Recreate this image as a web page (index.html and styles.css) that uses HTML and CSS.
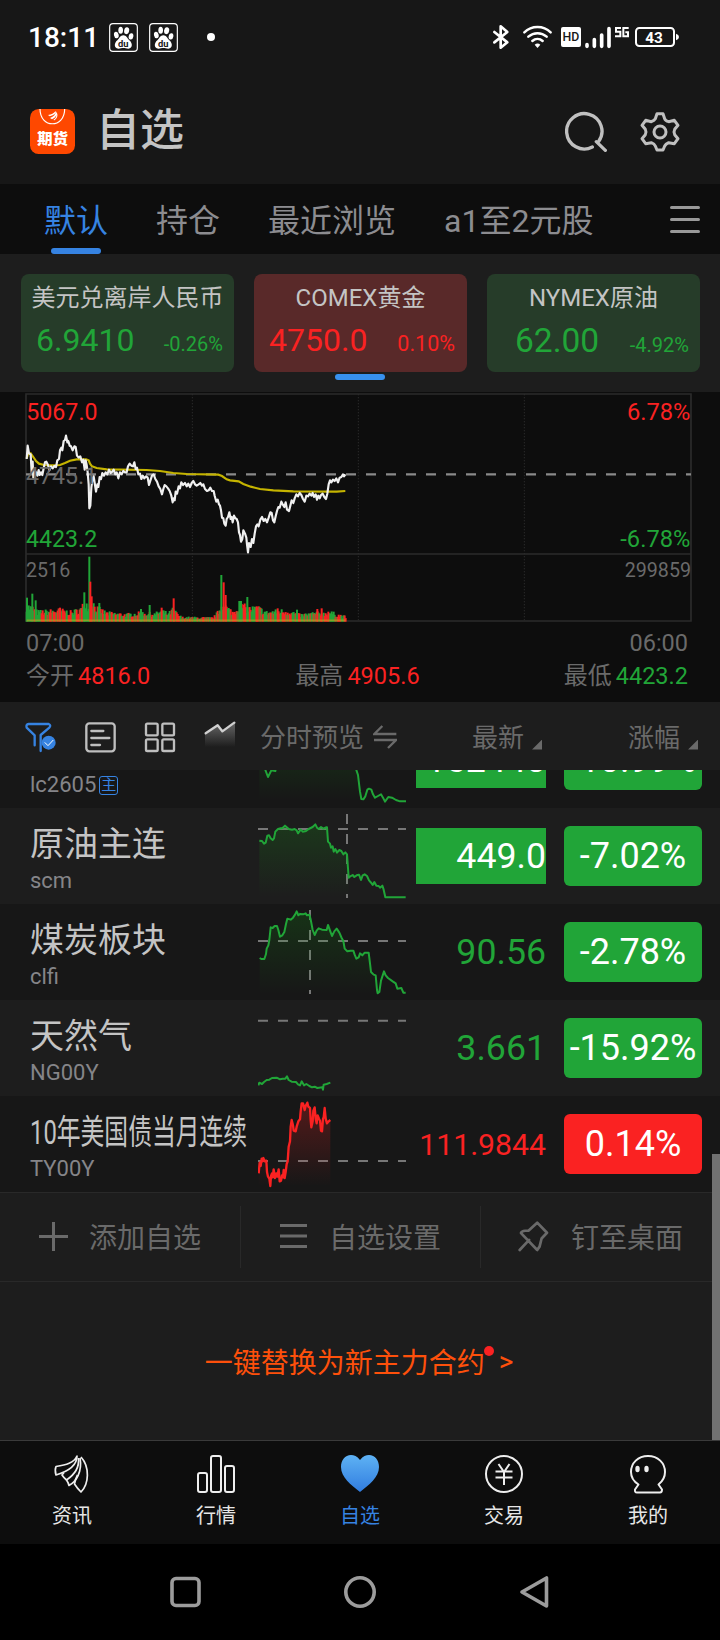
FILE: index.html
```
<!DOCTYPE html>
<html lang="zh-CN">
<head>
  <meta charset="UTF-8">
  <meta name="viewport" content="width=device-width, initial-scale=1.0">
  <title>自选</title>
  <link rel="stylesheet" href="styles.css">
</head>
<body>
  <svg class="defs" width="0" height="0">
    <defs>
      <linearGradient id="fillGreen" x1="0" y1="0" x2="0" y2="1">
        <stop offset="0" stop-color="#16a016" stop-opacity=".2"/>
        <stop offset="1" stop-color="#16a016" stop-opacity="0"/>
      </linearGradient>
      <linearGradient id="fillRed" x1="0" y1="0" x2="0" y2="1">
        <stop offset="0" stop-color="#fa2222" stop-opacity=".26"/>
        <stop offset="1" stop-color="#fa2222" stop-opacity="0"/>
      </linearGradient>
      <linearGradient id="fillGrey" x1="0" y1="0" x2="0" y2="1">
        <stop offset="0" stop-color="#999" stop-opacity=".6"/>
        <stop offset="1" stop-color="#999" stop-opacity="0"/>
      </linearGradient>
      <linearGradient id="fillHeart" x1="0" y1="0" x2="0" y2="1">
        <stop offset="0" stop-color="#5eb2f4"/>
        <stop offset="1" stop-color="#317de0"/>
      </linearGradient>
      <symbol id="paw" viewBox="0 0 87 87">
        <rect x="2" y="2" width="83" height="83" rx="10" fill="none" stroke="#fff" stroke-width="3.5"/>
        <g fill="#fff">
          <ellipse cx="22" cy="36" rx="7" ry="10" transform="rotate(-12 22 36)"/>
          <ellipse cx="35" cy="22" rx="7" ry="10.5"/>
          <ellipse cx="53" cy="23" rx="7.5" ry="10.5" transform="rotate(10 53 23)"/>
          <ellipse cx="66" cy="40" rx="7" ry="9.5" transform="rotate(10 66 40)"/>
          <path d="M43 37c9 0 12 9 18 15 10 8 11 24-3 25-6 0-10-2-15-2s-9 2-15 2c-14-1-13-17-3-25 6-6 9-15 18-15z"/>
        </g>
        <text x="43" y="71" class="paw-text">du</text>
      </symbol>
    </defs>
  </svg>

  <header class="status">
    <span class="clock">18:11</span>
    <svg width="29" height="29"><use href="#paw"/></svg>
    <svg width="29" height="29"><use href="#paw"/></svg>
    <span class="dot"></span>
    <svg class="signals" width="200" height="40" viewBox="390 51 600 120">
      <g fill="none" stroke="#fff" stroke-width="8" stroke-linejoin="round" stroke-linecap="round">
        <path d="M403 96l39 31-20 16V79l20 17-39 31"/>
        <path d="M493 97c22-21 57-21 79 0M505 110c16-14 39-14 55 0M517 123c9-8 22-8 31 0" stroke-width="7.500"/>
      </g>
      <path d="M524 134q9-7 17 0l-8.500 10z" fill="#fff"/>
      <rect x="603" y="81" width="60" height="60" rx="6" fill="#fff"/>
      <text x="633" y="124" class="hd">HD</text>
      <g stroke="#fff" stroke-width="11" stroke-linecap="round">
        <path d="M681 134v5M703 119v20M725 105v34M747 86v53"/>
      </g>
      <g fill="none" stroke="#fff" stroke-width="6">
        <path d="M783 84h-15v11h13v14h-16M806 84h-16v25h14V97h-8"/>
      </g>
      <rect x="828" y="84" width="114" height="54" rx="10" fill="none" stroke="#fff" stroke-width="6"/>
      <path d="M948 101q9 3 9 10t-9 10z" fill="#fff"/>
      <text x="882" y="129" class="battery">43</text>
    </svg>
  </header>

  <div class="title-bar">
    <svg width="45" height="45" viewBox="0 0 135 135">
      <rect width="135" height="135" rx="26" fill="#fe4800"/>
      <path d="M30 0c0 59 74 59 74 0" fill="none" stroke="#fff" stroke-width="3.500"/>
      <path d="M54 18q15-1 23-12 3 10-18 16zM60 27q17-6 18-20 6 15-12 24zM70 33q12-8 9-25 9 14-5 26z" fill="#fff"/>
      <text x="68" y="105" class="logo-text">期货</text>
    </svg>
    <h1>自选</h1>
    <svg class="search" width="42" height="42" viewBox="612 333 126 126">
      <path d="M694 441a53 53 0 1 1 18-15M706 425l27 26" fill="none" stroke="#c0c0c0" stroke-width="10" stroke-linecap="round"/>
    </svg>
    <svg width="42" height="42" viewBox="836 333 126 126">
      <path d="M890 341h18l5 15q2 6 12 9l17-4 11 15-10 12q-4 8 0 16l10 12-11 15-17-3q-9 4-12 10l-5 12h-18l-5-12q-3-7-12-10l-17 3-11-15 10-12q4-8 0-16l-10-12 11-15 17 4q9-4 12-9z" fill="none" stroke="#c0c0c0" stroke-width="9" stroke-linejoin="round"/>
      <circle cx="899" cy="396" r="18" fill="none" stroke="#c0c0c0" stroke-width="9"/>
    </svg>
  </div>

  <nav class="tabs">
    <span class="tab active">默认</span>
    <span class="tab">持仓</span>
    <span class="tab">最近浏览</span>
    <span class="tab">a1至2元股</span>
    <svg class="menu" width="30" height="28"><path d="M1.500 1.500h27M1.500 13.500h27M1.500 25.500h27" stroke="#999" stroke-width="3" stroke-linecap="round"/></svg>
  </nav>

  <section class="indices">
    <div class="index down">
      <div class="index-name">美元兑离岸人民币</div>
      <div class="index-nums"><span class="index-price">6.9410</span><span class="index-pct">-0.26%</span></div>
    </div>
    <div class="index up selected">
      <div class="index-name">COMEX黄金</div>
      <div class="index-nums"><span class="index-price">4750.0</span><span class="index-pct">0.10%</span></div>
    </div>
    <div class="index down oil">
      <div class="index-name">NYMEX原油</div>
      <div class="index-nums"><span class="index-price">62.00</span><span class="index-pct">-4.92%</span></div>
    </div>
  </section>

  <section class="chart">
    <svg width="720" height="235" viewBox="0 21 2160 705">
      <g fill="none" stroke="#2b2b2b" stroke-width="5">
        <path d="M78 27H2073V708H78zM78 507H2073"/>
        <path d="M577 27V708M1075 27V708M1573 27V708" stroke-width="3" stroke-dasharray="4 5"/>
      </g>
      <path d="M78 268H2073" stroke="#8a8a8a" stroke-width="7" stroke-dasharray="30 30"/>
      <path d="M80 220L84 208L92 205L100 216L108 228L117 236L132 240L160 241L180 240L195 234L210 227L230 223L258 223L266 226L270 236L276 244L290 249L320 253L440 255L480 258L520 264L560 267L655 269L666 273L680 283L690 286L716 289L730 297L752 305L780 312L820 316L880 319L1010 320L1036 318" fill="none" stroke="#c5b400" stroke-width="6.500"/>
      <path d="M80 222L83 182L87 205L92 208L95 262L98 230L100 278L104 256L108 262L112 272L116 255L119 270L123 262L127 270L131 250L135 232L139 230L144 240L148 256L153 244L158 250L163 243L168 246L172 226L177 222L180 196L184 188L187 196L191 168L195 165L198 152L202 172L205 168L209 182L213 184L218 196L223 184L227 186L231 212L236 218L241 214L246 232L250 224L254 254L257 226L260 240L263 262L266 298L268 370L271 362L274 308L277 284L281 274L285 300L288 320L292 298L295 306L299 276L303 282L307 264L312 272L317 262L322 268L327 254L332 264L337 260L341 254L346 268L350 262L355 280L360 262L365 268L370 258L375 262L380 262L384 244L389 236L394 242L399 244L403 232L407 252L411 248L415 268L420 266L424 282L428 272L433 280L438 274L443 278L447 300L452 284L456 272L461 268L466 282L471 290L476 304L481 312L486 328L490 312L494 300L499 304L504 310L509 318L514 332L518 352L521 340L524 346L527 320L531 326L536 304L540 310L544 292L549 300L555 294L560 304L565 296L570 306L575 294L580 288L585 298L590 302L596 298L601 294L606 302L610 298L615 312L621 318L626 316L631 308L636 318L641 318L644 332L649 350L653 344L657 358L660 362L663 376L666 398L670 400L673 416L677 422L680 402L684 396L688 382L692 402L695 396L698 412L702 392L706 400L710 402L714 412L717 442L720 450L723 470L727 462L730 436L735 446L739 458L741 478L744 502L747 474L752 486L756 462L760 474L764 446L768 424L772 418L776 424L781 404L786 396L791 408L796 402L801 412L806 398L811 382L815 384L819 406L823 412L827 394L831 378L835 366L839 368L844 350L848 358L853 366L857 352L861 374L867 378L871 362L875 346L880 354L884 340L889 328L894 334L899 324L904 330L909 342L914 350L919 332L924 334L929 326L934 332L938 324L942 336L947 328L951 344L955 332L959 340L963 330L968 326L973 336L978 342L982 326L986 298L990 286L994 292L999 284L1004 288L1009 280L1014 292L1019 278L1024 276L1029 268L1032 274L1036 268" fill="none" stroke="#f0f0f0" stroke-width="6.500" stroke-linejoin="round"/>
      <g id="volume"></g>
      <g class="chart-text">
        <text x="79" y="105" class="c-up">5067.0</text>
        <text x="78" y="297" class="c-ref">4745.1</text>
        <text x="78" y="487" class="c-down">4423.2</text>
        <text x="2071" y="105" class="c-up end pct-label">6.78%</text>
        <text x="2071" y="487" class="c-down end pct-label">-6.78%</text>
        <text x="78" y="576" class="c-vol">2516</text>
        <text x="2073" y="576" class="c-vol end">299859</text>
      </g>
    </svg>
    <div class="times"><span>07:00</span><span>06:00</span></div>
    <div class="stats">
      <span>今开<b class="c-up">4816.0</b></span>
      <span class="high">最高<b class="c-up">4905.6</b></span>
      <span>最低<b class="c-down">4423.2</b></span>
    </div>
  </section>

  <div class="list-head">
    <svg width="220" height="34" viewBox="69 75 660 102">
      <g fill="none" stroke-linejoin="round" stroke-linecap="round">
        <path d="M104 151v-30L80 98q-3-10 6-11h60q8 3 2 11l-26 22v48" stroke="#3683e2" stroke-width="7"/>
        <circle cx="146" cy="143" r="21" fill="#3683e2"/>
        <path d="M135 143l9 9 15-16" stroke="#fff" stroke-width="3"/>
        <rect x="259" y="85" width="85" height="84" rx="9" stroke="#bfbfbf" stroke-width="7"/>
        <path d="M274 108h36M274 129h54M274 150h26" stroke="#bfbfbf" stroke-width="7"/>
        <g stroke="#bfbfbf" stroke-width="7">
          <rect x="438" y="86" width="35" height="35" rx="4"/>
          <rect x="487" y="86" width="35" height="35" rx="4"/>
          <rect x="438" y="133" width="35" height="35" rx="4"/>
          <rect x="487" y="133" width="35" height="35" rx="4"/>
        </g>
        <path d="M615 116l38-25 14 18 38-27v74h-90z" fill="url(#fillGrey)"/>
        <path d="M617 115l36-24 14 18 36-26" stroke="#d0d0d0" stroke-width="7"/>
      </g>
    </svg>
    <span class="preview">分时预览</span>
    <svg class="swap" width="24" height="24" viewBox="1120 93 72 72"><path d="M1148 96l-24 24h66M1123 138h66l-24 24" fill="none" stroke="#6a6a6a" stroke-width="7"/></svg>
    <span class="col-price">最新<i class="sort"></i></span>
    <span class="col-pct">涨幅<i class="sort"></i></span>
  </div>

  <main class="list">
    <div class="row">
      <div class="name"><p>lc2605<em class="main-tag">主</em></p></div>
      <svg class="mini" viewBox="774 51 444 288">
        <path d="M778 120l17 104 10 22 10-20 10-4 20-60 60-30 120 10 44 78 8 20 6 60 4 14H778z" fill="url(#fillGreen)"/>
        <path d="M785 160L795 222L804 246L814 226L826 228L836 168L896 138L1016 148L1068 222L1074 240L1080 290L1084 312L1090 313L1096 304L1102 284L1107 281L1114 284L1119 298L1125 308L1134 303L1143 298L1149 308L1155 320L1165 306L1176 308L1188 315L1200 319H1218" class="line-down"/>
      </svg>
      <div class="price flash">152440</div>
      <div class="pct down">-10.99%</div>
    </div>
    <div class="row alt">
      <div class="name"><h2>原油主连</h2><p>scm</p></div>
      <svg class="mini" viewBox="774 339 444 288">
        <path d="M774 402H1218M1041 357V609" class="ref"/>
        <path d="M778 437L794 447L804 422L818 434L828 404L850 394L880 404L904 412L946 390L958 402L981 398L984 440L1002 470L1020 467L1041 476L1046 548V606H778z" fill="url(#fillGreen)"/>
        <path d="M778 437L786 438L792 446L797 443L802 422L807 421L812 430L818 435L822 430L826 410L834 402L842 400L848 399L855 392L862 398L866 402L876 404L884 402L890 406L894 415L902 404L908 410L918 408L926 402L938 396L946 388L951 398L956 402L963 396L970 401L978 397L981 397L984 440L990 446L993 458L998 454L1001 470L1006 462L1011 473L1018 465L1024 468L1030 478L1036 472L1041 478L1046 548L1051 544L1058 540L1063 546L1070 541L1077 539L1083 555L1088 541L1094 538L1101 543L1107 556L1114 564L1118 570L1123 561L1129 572L1136 573L1140 578L1147 572L1151 584L1156 607L1217 607" class="line-down"/>
      </svg>
      <div class="price flash">449.0</div>
      <div class="pct down">-7.02%</div>
    </div>
    <div class="row">
      <div class="name"><h2>煤炭板块</h2><p>clfi</p></div>
      <svg class="mini" viewBox="774 -108 444 288">
        <path d="M774 3H1218M930 -90V162" class="ref"/>
        <path d="M779 56L794 55L808 0L812 -38L830 -42L840 -10L852 -20L864 -64L880 -68L892 -84L930 -74L938 -30L944 -16L960 -35L980 -32L989 -46L999 -15L1015 -33L1030 0L1035 28L1060 30L1070 52L1085 40L1106 37L1113 98L1128 108V162H779z" fill="url(#fillGreen)"/>
        <path d="M779 54L784 57L793 57L798 42L800 26L805 16L808 0L812 -38L818 -36L824 -42L831 -42L835 -30L840 -10L847 -14L853 -24L858 -48L862 -64L872 -61L879 -67L885 -76L890 -86L895 -74L900 -78L909 -77L917 -80L921 -74L928 -76L932 -62L938 -30L944 -15L950 -28L956 -35L966 -31L980 -30L984 -45L990 -28L996 -12L1003 -26L1010 -34L1018 -22L1025 -6L1030 3L1034 26L1042 34L1052 32L1060 32L1064 44L1069 56L1076 52L1080 40L1087 46L1094 38L1106 38L1110 70L1113 96L1121 104L1127 106L1131 150L1133 160L1138 156L1143 122L1152 94L1157 106L1164 114L1178 124L1187 130L1192 146L1204 144L1210 158L1217 158" class="line-down"/>
      </svg>
      <div class="price c-down">90.56</div>
      <div class="pct down">-2.78%</div>
    </div>
    <div class="row alt">
      <div class="name"><h2>天然气</h2><p>NG00Y</p></div>
      <svg class="mini" viewBox="774 180 444 288">
        <path d="M774 242H1218" class="ref"/>
        <path d="M775 436L778 428L786 432L792 426L800 420L808 419L816 414L830 413L840 418L848 416L856 416L861 409L866 420L875 425L888 426L894 433L900 436L905 424L912 436L919 432L928 438L936 442L944 440L952 444L967 442L969 449L971 434L980 432L991 428" class="line-down"/>
      </svg>
      <div class="price c-down">3.661</div>
      <div class="pct down">-15.92%</div>
    </div>
    <div class="row">
      <div class="name"><h2 class="squeeze">10年美国债当月连续</h2><p>TY00Y</p></div>
      <svg class="mini" viewBox="774 468 444 288">
        <path d="M774 663H1218" class="ref"/>
        <path d="M776 700L788 655L800 665L806 710L860 690L866 620L872 570L876 540L886 570L894 550L904 495L924 492L934 555L944 505L956 545L966 570L974 505L982 545H991V738H776z" fill="url(#fillRed)"/>
        <path d="M776 700L779 668L782 678L785 656L787 664L790 654L794 664L799 662L801 696L804 710L808 716L811 738L813 708L816 700L818 712L821 688L825 714L829 700L832 710L836 688L839 724L843 722L846 706L849 712L851 690L854 714L857 696L860 672L863 664L866 620L870 604L872 560L875 540L879 556L881 572L887 574L890 560L895 544L900 538L902 514L905 490L909 490L912 502L914 510L917 498L922 488L925 500L930 504L932 540L934 562L938 544L940 512L944 502L947 536L950 550L953 526L957 536L960 542L963 572L966 574L969 536L971 532L974 504L977 536L981 550L986 544L991 540" class="line-up"/>
      </svg>
      <div class="price small c-up">111.9844</div>
      <div class="pct up">0.14%</div>
    </div>

    <div class="actions">
      <div class="action">
        <svg width="31" height="31"><path d="M15.500 1v29M1 15.500h29" stroke="#6a6a6a" stroke-width="3"/></svg>添加自选
      </div>
      <div class="action">
        <svg width="31" height="31"><path d="M2 4.500h27M2 15h27M2 25.500h27" stroke="#6a6a6a" stroke-width="3"/></svg>自选设置
      </div>
      <div class="action">
        <svg width="31" height="31" viewBox="356 845 92 92"><path d="M361 931l28-30M365 880q2-5 12-6h10l26-24 29 30-16 17-6 24-7 10-48-50z" fill="none" stroke="#6a6a6a" stroke-width="8" stroke-linejoin="round" stroke-linecap="round"/></svg>钉至桌面
      </div>
    </div>
    <div class="replace"><span class="replace-text">一键替换为新主力合约</span><span>&gt;</span></div>
    <div class="scrollbar"></div>
  </main>

  <footer class="tabbar">
    <div class="tab-item">
      <svg width="40" height="40" viewBox="0 0 40 40"><g fill="none" stroke="#eee" stroke-width="1.700" stroke-linejoin="round">
        <path d="M25 2C22 9 14 11 4 12.500q-1.500 3.500 0 8.500C14 18 25 13 25 2z"/>
        <path d="M12 18.500l-2 2.500q2 3 4.500 5C22 21 27.500 14 26.500 4"/>
        <path d="M14.500 26q2 3 2.500 5.500C24 28 30.500 18 28 4"/>
        <path d="M25.500 21q-2.500 5-3 9 2.500 4 6.500 8C37 30 38 13 29 3"/>
      </g></svg>
      <span>资讯</span>
    </div>
    <div class="tab-item">
      <svg width="40" height="40" viewBox="0 0 40 40"><g fill="none" stroke="#eee" stroke-width="2">
        <rect x="2" y="19" width="9" height="19" rx="2"/><rect x="15" y="2" width="10" height="36" rx="2"/><rect x="29" y="12" width="9" height="26" rx="2"/></g></svg>
      <span>行情</span>
    </div>
    <div class="tab-item active">
      <svg width="40" height="40" viewBox="0 0 40 40"><path d="M20 6C23 2 26 1 29 1c6 0 10 5 10 12 0 10-10 18-19 25C11 31 1 23 1 13 1 6 5 1 11 1c3 0 6 1 9 5z" fill="url(#fillHeart)"/></svg>
      <span>自选</span>
    </div>
    <div class="tab-item">
      <svg width="40" height="40" viewBox="0 0 40 40"><g fill="none" stroke="#eee" stroke-width="2">
        <circle cx="20" cy="20" r="18"/><path d="M14.500 10l5.500 8 5.500-8M11.500 17.500h17M11.500 23.500h17M20 18v13"/></g></svg>
      <span>交易</span>
    </div>
    <div class="tab-item">
      <svg width="40" height="40" viewBox="0 0 40 40"><path d="M10.500 30.500C5 27 3 23 3 18 3 9 10 2 20 2s17 7 17 16c0 5-2 9-6.500 12.500l3.500 5q0 3-2 3H9q-2.500 0-2-3z" fill="none" stroke="#eee" stroke-width="2" stroke-linejoin="round"/><ellipse cx="9.500" cy="15" rx="2.200" ry="3.300" fill="#eee"/><ellipse cx="18.500" cy="15" rx="2.200" ry="3.300" fill="#eee"/></svg>
      <span>我的</span>
    </div>
  </footer>

  <div class="sysnav">
    <svg width="34" height="34"><rect x="4" y="3.500" width="27" height="27" rx="4" fill="none" stroke="#9c9c9c" stroke-width="3.600"/></svg>
    <svg width="34" height="34"><circle cx="17" cy="17" r="14.200" fill="none" stroke="#9c9c9c" stroke-width="3.600"/></svg>
    <svg width="34" height="34"><path d="M28.500 3v28L4 17z" fill="none" stroke="#9c9c9c" stroke-width="3.600" stroke-linejoin="round"/></svg>
  </div>

  <script>
    // outline of the volume bars: [x, height]
    const shape = [[80, 60], [100, 48], [112, 36], [145, 38], [180, 42], [215, 34], [245, 48], [256, 80], [262, 60], [275, 75], [290, 50], [320, 32], [380, 26], [425, 32], [465, 28], [485, 40], [505, 28], [520, 46], [530, 30], [545, 16], [640, 14], [655, 36], [668, 68], [682, 50], [700, 34], [722, 62], [745, 48], [775, 50], [800, 34], [840, 40], [870, 38], [900, 24], [945, 32], [970, 30], [990, 34], [1037, 18]];
    // single peaks: [x, height, colour]
    const peaks = [[81, 72, "g"], [97, 84, "g"], [107, 64, "g"], [253, 88, "g"], [268, 195, "g"], [271, 120, "r"], [275, 76, "r"], [298, 56, "g"], [180, 42, "r"], [423, 38, "g"], [449, 50, "g"], [485, 42, "r"], [521, 70, "r"], [664, 140, "g"], [671, 118, "r"], [677, 80, "r"], [718, 62, "g"], [723, 62, "g"], [742, 74, "g"], [770, 46, "r"], [833, 40, "r"], [891, 36, "g"], [952, 38, "r"], [965, 40, "r"], [985, 30, "r"]];
    const volume = document.getElementById("volume");
    let seed = 7;
    function rand() {
      seed = (seed * 16807) % 2147483647;
      return seed / 2147483647;
    }
    function bar(x, h, colour) {
      const r = document.createElementNS("http://www.w3.org/2000/svg", "rect");
      r.setAttribute("x", x - 3);
      r.setAttribute("y", 710 - h);
      r.setAttribute("width", 6);
      r.setAttribute("height", h);
      r.setAttribute("fill", colour === "g" ? "#21a538" : "#fa2222");
      volume.appendChild(r);
    }
    for (let x = 80; x <= 1037; x += 3) {
      let i = 0;
      while (i < shape.length - 2 && shape[i + 1][0] < x) i++;
      const [x0, h0] = shape[i], [x1, h1] = shape[i + 1];
      const top = h0 + (h1 - h0) * (x - x0) / (x1 - x0);
      bar(x, Math.max(7, top * (0.5 + 0.5 * rand())), rand() > 0.48 ? "g" : "r");
    }
    peaks.forEach(p => bar(...p));
    volume.insertAdjacentHTML("beforeend", '<path d="M80 706H1037" stroke="#c5a020" stroke-width="5" stroke-opacity=".6"/>');
  </script>
</body>
</html>
```

FILE: styles.css
```
* { box-sizing: border-box; }
body { margin: 0; width: 720px; height: 1640px; display: flex; flex-direction: column; overflow: hidden; background: #171717; color: #c4c4c4; font-family: Roboto, "Noto Sans CJK SC", sans-serif; }
h1, h2, p { margin: 0; font-weight: 400; }
svg { flex: none; display: block; }
.defs { position: absolute; }
.c-up { color: #fa2222; fill: #fa2222; }
.c-down { color: #21a538; fill: #21a538; }

.status { height: 74px; flex: none; display: flex; align-items: center; padding-left: 28px; color: #fff; }
.clock { width: 81px; font-size: 28px; font-weight: 500; line-height: 30px; padding-top: 2px; }
.status svg { margin-right: 11px; }
.status .dot { width: 8px; height: 8px; border-radius: 50%; background: #fff; margin-left: 18px; }
.status .signals { margin: 0 30px 0 auto; }
.paw-text { font: 700 28px Roboto, sans-serif; text-anchor: middle; fill: #171717; }
.hd { font: 500 37px Roboto, sans-serif; text-anchor: middle; fill: #171717; }
.battery { font: 700 46px Roboto, sans-serif; text-anchor: middle; fill: #fff; }

.title-bar { height: 110px; flex: none; display: flex; align-items: center; padding: 5px 39px 0 30px; }
.logo-text { font: 900 46px "Noto Sans CJK SC", sans-serif; text-anchor: middle; fill: #fff; }
.title-bar h1 { font-size: 44px; font-weight: 500; line-height: 50px; margin: -2px 0 0 21px; }
.title-bar .search { margin: 0 32px 0 auto; }

.tabs { height: 70px; flex: none; display: flex; gap: 48px; padding: 0 20px 0 44px; background: #0d0d0d; font-size: 32px; line-height: 74px; color: #8c8c90; }
.tab { height: 70px; }
.tab.active { position: relative; color: #3683e2; }
.tab.active::after { content: ""; position: absolute; left: 7px; bottom: 0; width: 50px; height: 6px; border-radius: 3px; background: #3683e2; }
.tabs .menu { margin: 22px 0 0 auto; }

.indices { height: 138px; flex: none; display: grid; grid-template-columns: repeat(3, 213px); gap: 20px; padding: 20px 20px 20px 21px; background: #1d1d1d; }
.index { position: relative; height: 98px; border-radius: 8px; }
.index.down { background: #263c29; color: #21a538; }
.index.up { background: #592929; color: #fa2222; }
.index.selected::after { content: ""; position: absolute; left: 81px; bottom: -8px; width: 50px; height: 6px; border-radius: 3px; background: #3790ee; }
.index-name { font-size: 24px; line-height: 48px; text-align: center; color: #c4c4c4; white-space: nowrap; }
.index-nums { display: flex; justify-content: space-between; align-items: baseline; padding: 0 11px 0 15px; line-height: 36px; }
.index-price { font-size: 32px; }
.index-pct { font-size: 20px; }
.index.up .index-nums { padding-right: 12px; }
.index.up .index-pct { font-size: 21.5px; }
.index.oil .index-nums { padding-left: 28px; line-height: 37px; }
.index.oil .index-price { font-size: 33.5px; }

.chart { height: 310px; flex: none; background: #0d0d0d; color: #6a6a6a; }
.chart-text { font: 69.5px Roboto, sans-serif; }
.chart-text .end { text-anchor: end; }
.chart-text .pct-label { font-size: 71px; }
.chart-text .c-ref { fill: #6a6a6a; }
.chart-text .c-vol { fill: #6a6a6a; font-size: 59px; }
.times, .stats { display: flex; justify-content: space-between; padding: 0 32px 0 26px; font-size: 23.5px; line-height: 32px; }
.stats { font-size: 24px; line-height: 34px; }
.stats b { font-weight: 400; font-size: 23.5px; margin-left: 4px; }
.stats .high { padding-left: 1px; }

.list-head { height: 68px; flex: none; display: flex; align-items: center; padding: 1px 0 0 23px; background: #1d1d1d; font-size: 26px; line-height: 36px; color: #6a6a6a; }
.preview { margin: 2px 0 0 17px; }
.swap { margin-left: 9px; }
.col-price, .col-pct { display: flex; align-items: center; gap: 8px; margin-top: 2px; }
.col-price { margin-left: 75px; }
.col-pct { margin-left: 86px; }
.sort { width: 10px; height: 10px; margin-top: 14px; background: #6a6a6a; clip-path: polygon(100% 0, 100% 100%, 0 100%); }

/* scrolled down, the first row is cut off by the head */
.list { position: relative; height: 670px; flex: none; overflow: hidden; background: #1d1d1d; }
.row { height: 96px; display: flex; align-items: center; background: #171717; }
.row:first-child { margin-top: -58px; }
.row:first-child .name { padding-top: 50px; }
.row.alt { background: #1d1d1d; }
.name { width: 227px; margin-left: 30px; padding-top: 6px; }
.name h2 { font-size: 34px; line-height: 44px; white-space: nowrap; }
.name .squeeze { transform: scaleX(.7); transform-origin: left; }
.name p { display: flex; align-items: center; font-size: 22px; line-height: 30px; color: #858589; }
.main-tag { width: 19px; height: 19px; margin: 1px 0 0 3px; border: 1px solid #3683e2; border-radius: 3px; font-style: normal; font-size: 15px; line-height: 16px; text-align: center; color: #3683e2; }
.mini { width: 148px; height: 96px; margin-left: 1px; }
.ref { fill: none; stroke: #777; stroke-width: 6; stroke-dasharray: 30 30; }
.line-down, .line-up { fill: none; stroke: #21a538; stroke-width: 6; stroke-linejoin: round; }
.line-up { stroke: #fa2222; stroke-width: 7; }
.price { width: 130px; height: 56px; margin-left: 10px; font-size: 35.7px; line-height: 57px; text-align: right; }
.price.flash { background: #21a538; color: #fff; }
.price.small { font-size: 30.2px; }
.pct { width: 138px; height: 60px; margin-left: 18px; border-radius: 6px; font-size: 36px; line-height: 60px; text-align: center; color: #fff; }
.pct.down { background: #21a538; }
.pct.up { background: #fa2222; }

.actions { height: 90px; display: flex; align-items: center; border-top: 1px solid #292929; border-bottom: 1px solid #292929; }
.action { width: 241px; height: 62px; display: flex; align-items: center; gap: 20px; padding: 0 0 2px 38px; border-right: 1px solid #292929; font-size: 28px; color: #6a6a6a; white-space: nowrap; }
.action:nth-child(2) { width: 240px; padding-left: 37px; }
.action:last-child { border: 0; padding-left: 37px; gap: 22px; width: 239px; }
.replace { height: 158px; display: flex; align-items: center; justify-content: center; gap: 14px; padding-right: 2px; font-size: 28px; color: #fe500b; }
.replace-text { position: relative; }
.replace-text::after { content: ""; position: absolute; right: -9px; top: 5px; width: 10px; height: 10px; border-radius: 50%; background: #fa2222; }
.scrollbar { position: absolute; right: 0; top: 384px; width: 8px; height: 286px; background: #717171; }

.tabbar { height: 104px; flex: none; display: flex; border-top: 1px solid #3a3a3a; background: #0d0d0d; }
.tab-item { flex: 1; display: flex; flex-direction: column; align-items: center; padding-top: 13px; gap: 7px; font-size: 20px; line-height: 30px; color: #e6e6e6; }
.tab-item.active { color: #3683e2; }
.sysnav { height: 96px; flex: none; display: flex; align-items: center; justify-content: center; gap: 141px; background: #000; }
```
